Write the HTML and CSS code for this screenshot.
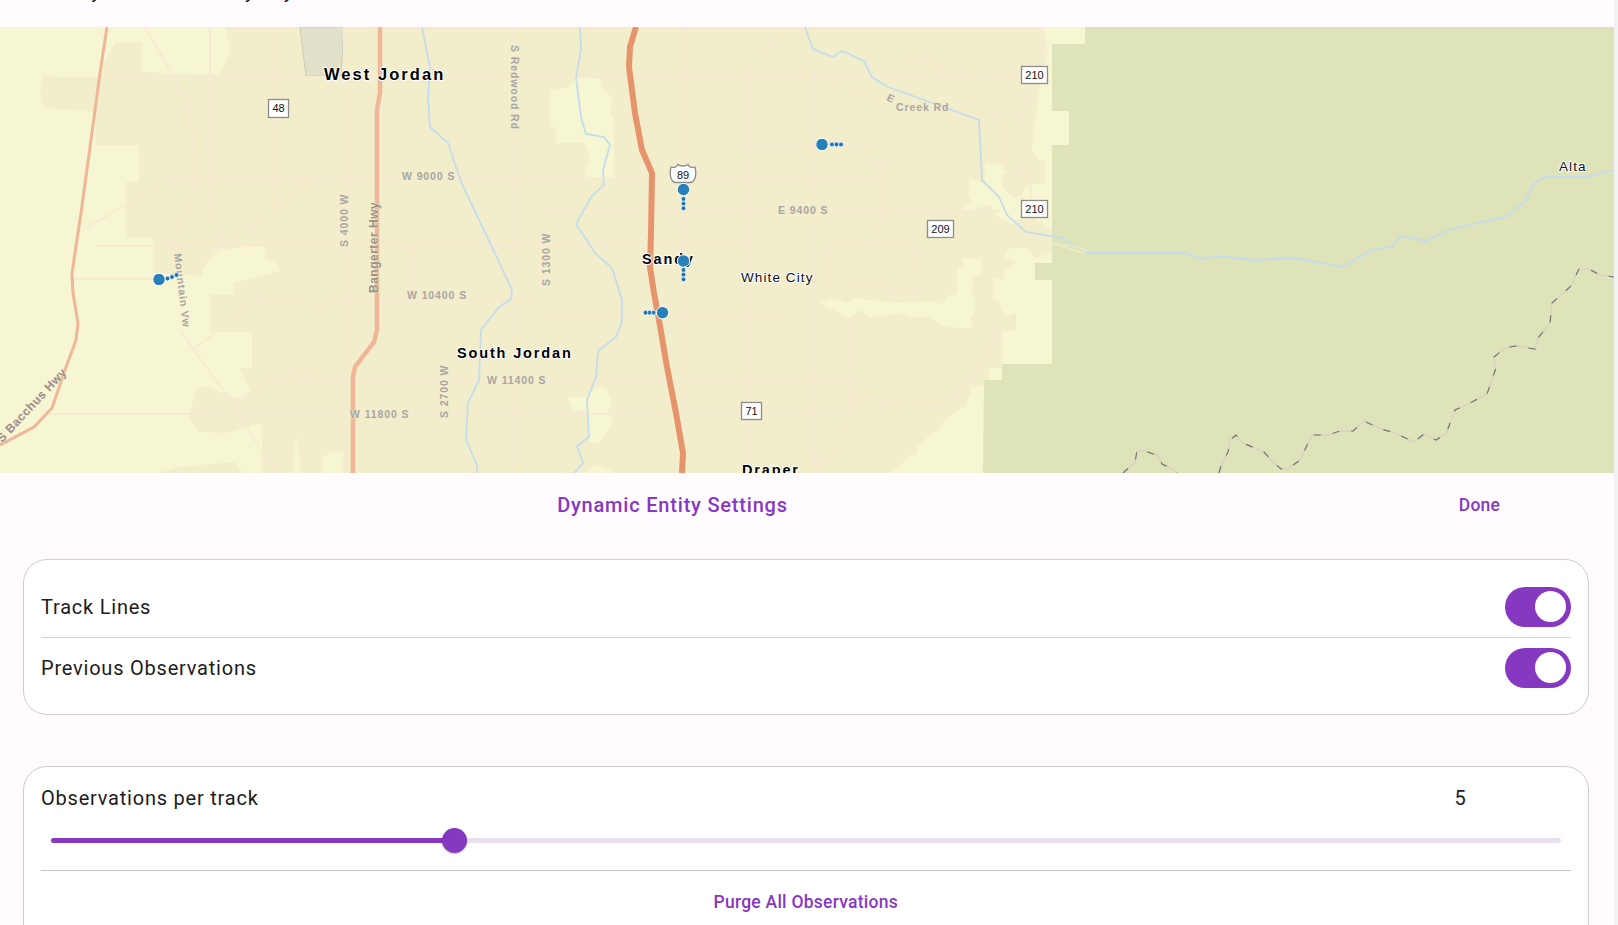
FILE: index.html
```html
<!DOCTYPE html>
<html lang="en">
<head>
    <meta charset="UTF-8">
    <title>Dynamic Entity Settings</title>
    <link rel="stylesheet" href="styles.css">
</head>
<body>
<div class="screen">
    <div class="top-bar"><div class="top-text">Hourly entries show by day</div></div>

    <svg class="map" viewBox="0 27 1614 446" width="1614" height="446" xmlns="http://www.w3.org/2000/svg">
        <rect class="land" x="0" y="27" width="1614" height="446"/>

        <!-- urban area -->
        <path class="urban" d="M225 27L231 50L220 75L142 72V42H115L105 60L98 77H52L43 73L40 95L43 108L95 112L96 145H139V182H126V238H153V273L201 276L208 260L213 250L246 247H265V260L275 262L280 271L265 275L234 283V295H210V332H252V368H239L251 393L241 400L207 387H196L189 418L198 432L227 433L262 423V473H1000V380L1052 260V183H1045V158L1040 162L1032 150V145L1040 85L1047 55L1043 27Z"/>
        <path class="urban" d="M158 473L179 467L234 462L243 473Z"/>

        <!-- light patches -->
        <path class="land" d="M550 90L566 88L576 78L599 75L602 88L612 97L611 113L614 118V177H586L585 170L590 157L585 143H557L555 127H550Z"/>
        <path class="land" d="M567 397H585L599 387L607 390L612 402L607 413H613L612 423L599 443H590L588 417L586 410H573Z"/>
        <path class="land" d="M585 473L590 468L600 465L615 473Z"/>
        <path class="land" d="M322 458L331 452L343 453V473H322Z"/>
        <path class="land" d="M296 433L301 473H293Z"/>
        <path class="land" d="M1010 248H1027L1035 258L1052 253V364H1002V332L1016 330V313L1005 317L1000 303L993 298V277L1004 280L1005 270L1017 263L1004 258Z"/>
        <path class="land" d="M989 368H1002V380H989Z"/>
        <path class="land" d="M984 385L970 388L971 396L967 398V405L943 422L940 430L932 433L917 447V455H908L907 460L887 473H984Z"/>
        <path class="land" d="M818 302L832 298L848 303L857 298L867 300L903 303L933 301L942 305L947 295H957V268L963 267V257L982 260V275L971 277L973 285L972 293L975 295V315L970 318L973 325L968 328L948 327L928 317H915L900 313L880 316L870 318L860 310L850 318Z"/>
        <path class="land" d="M985 163L1000 164L1007 172L1002 175L1003 188L1015 198L1021 195V217L1013 225L998 217L990 205L957 213L972 202L968 195L970 178L982 183L985 180Z"/>
        <path class="land" d="M1025 185L1052 183V232L1040 222L1030 215L1022 195Z"/>

        <!-- mountains -->
        <path class="forest" d="M1085 27H1614V473H983L984 380H1002V364H1052V280H1035V263H1052V145H1069V111H1052V44H1085Z"/>
        <path class="quarry" d="M300 27H344L341 76H306Z"/>

        <!-- minor roads -->
        <path class="road" d="M98 77H1020M170 178H880M96 246H345M72 279H155M345 246H620M345 298H540M540 211H1000M620 246H760M540 312H780M270 381H850M50 414H850"/>
        <path class="road" d="M210 27V220L230 250M278 27V205M344 27V473M412 246V298M513 27V473M683 27V473M749 60V473M815 70V473M850 318V417M179 473V467"/>
        <path class="road" d="M145 27L170 70L190 110L196 180L175 240V260M180 330L230 400L275 473M80 232L170 178M190 270L320 178M195 348L260 298H300L318 308L345 297L395 300M236 400L300 368L345 381M749 60L790 30"/>
        <path class="road" d="M900 58L927 60L943 75L1020 77M960 105L987 100L1002 125L1005 165L1028 172L1032 198M1013 132L1025 102L1040 68L1047 52L1042 28M827 247H918L920 293H888L882 285L833 288L828 283L825 257L827 247M850 403L865 398L897 402L903 407H938L957 395L963 383L980 373L985 353L995 343L993 330L1003 317M850 417L842 427L839 447L823 462L810 455L815 463L817 473M815 71L843 87L884 100M872 245V233L884 220V160L875 165L872 145H750"/>

        <!-- rivers -->
        <path class="river" d="M422 27L430 67L428 97L430 127L448 143L461 182L492 247L512 290L511 299L498 308L481 330L479 380L468 403L466 440L477 465V473"/>
        <path class="river" d="M580 27L581 50L576 78L581 117L586 134L604 137L610 145L603 170L604 185L592 196L576 224L595 253L612 268L622 300V322L616 337L598 351L596 377L587 400L589 437L577 446L583 463L574 473"/>
        <path class="river" d="M805 27L813 49L833 57L842 51L864 61L872 77L888 87L979 120L982 180L999 197L1007 215L1026 232L1063 238L1083 253H1185L1204 259L1216 256L1255 260L1295 258L1342 267L1372 250L1392 247L1401 236L1426 241L1451 229L1506 217L1525 202L1533 184L1545 177H1586L1614 170"/>
        <path class="lake" d="M1052 243L1078 247L1087 250L1083 253L1068 248Z"/>

        <!-- county line -->
        <path class="line-base" d="M1123 473L1135 462L1137 451H1145L1159 456L1162 464L1171 468L1177 473M1219 473L1222 463L1228 452L1230 440L1236 435L1243 443L1264 452L1273 462L1281 469H1288L1300 460L1312 435H1328L1340 431H1353L1364 421L1381 429L1395 433L1414 442L1424 434L1436 440L1446 434L1455 410L1472 402L1487 394L1496 368L1494 357L1505 348L1515 346L1535 349L1538 338L1550 323L1552 303L1570 287L1579 269H1589L1600 275L1614 277"/>
        <path class="line-dash" d="M1123 473L1135 462L1137 451H1145L1159 456L1162 464L1171 468L1177 473M1219 473L1222 463L1228 452L1230 440L1236 435L1243 443L1264 452L1273 462L1281 469H1288L1300 460L1312 435H1328L1340 431H1353L1364 421L1381 429L1395 433L1414 442L1424 434L1436 440L1446 434L1455 410L1472 402L1487 394L1496 368L1494 357L1505 348L1515 346L1535 349L1538 338L1550 323L1552 303L1570 287L1579 269H1589L1600 275L1614 277"/>

        <!-- highways -->
        <path class="hwy-minor" d="M380 27V93L377 110V330L374 342L355 367L353 377V473"/>
        <path class="hwy-thin" d="M107 27L100 73L91 140L81 213L72 273L73 293L78 323L76 340L65 370L52 408L34 427L0 445"/>
        <path class="hwy-main" d="M636 27L630 47L629 67L635 113L642 150L652 173L651 233L650 267L654 293L659 320L667 367L676 413L683 453L682 473"/>

        <!-- road names -->
        <text class="street" x="402" y="180">W 9000 S</text>
        <text class="street" x="407" y="299">W 10400 S</text>
        <text class="street" x="487" y="384">W 11400 S</text>
        <text class="street" x="350" y="418">W 11800 S</text>
        <text class="street" x="778" y="214">E 9400 S</text>
        <text class="street" transform="translate(511 45) rotate(90)">S Redwood Rd</text>
        <text class="street" transform="translate(348 247) rotate(-90)">S 4000 W</text>
        <text class="street" transform="translate(550 286) rotate(-90)">S 1300 W</text>
        <text class="street" transform="translate(448 418) rotate(-90)">S 2700 W</text>
        <text class="street" transform="translate(174 254) rotate(83)">Mountain Vw</text>
        <text class="street" transform="translate(886 100) rotate(25)">E</text>
        <text class="street" x="896" y="111">Creek Rd</text>
        <text class="street street-big" transform="translate(378 293) rotate(-90)">Bangerter Hwy</text>
        <text class="street street-big" transform="translate(2 443) rotate(-47)">S Bacchus Hwy</text>

        <!-- shields -->
        <g class="shield"><rect x="268.500" y="99.500" width="20" height="18"/><text x="278.500" y="112">48</text></g>
        <g class="shield"><rect x="1021.500" y="66.500" width="26" height="17"/><text x="1034.500" y="79">210</text></g>
        <g class="shield"><rect x="1021.500" y="200.500" width="26" height="17"/><text x="1034.500" y="213">210</text></g>
        <g class="shield"><rect x="927.500" y="220.500" width="26" height="17"/><text x="940.500" y="233">209</text></g>
        <g class="shield"><rect x="741.500" y="402.500" width="20" height="17"/><text x="751.500" y="415">71</text></g>
        <g class="shield"><path d="M671 167C674 168 677 167 678 164.500C680 166.500 686 166.500 688 164.500C689 167 692 168 695 167C696 171 696 175 695 178C694 181 692 182.500 690 182.500H676C674 182.500 672 181 671 178C670 175 670 171 671 167Z"/><text x="683" y="179">89</text></g>

        <!-- place names -->
        <text class="city" x="324" y="80">West Jordan</text>
        <text class="city city-small" x="457" y="358">South Jordan</text>
        <text class="city city-small" x="642" y="264">Sandy</text>
        <text class="city city-small" x="742" y="475">Draper</text>
        <text class="town" x="741" y="282">White City</text>
        <text class="town" x="1559" y="171">Alta</text>

        <!-- tracked entities -->
        <g class="entity">
            <circle cx="159" cy="279.500" r="6.200"/>
            <circle class="obs" cx="167.500" cy="278.500" r="2.400"/><circle class="obs" cx="172" cy="277" r="2.400"/><circle class="obs" cx="176.500" cy="275" r="2.400"/>
        </g>
        <g class="entity">
            <circle cx="822" cy="144.500" r="6.200"/>
            <circle class="obs" cx="832" cy="144.500" r="2.400"/><circle class="obs" cx="836.500" cy="144.500" r="2.400"/><circle class="obs" cx="841" cy="144.500" r="2.400"/>
        </g>
        <g class="entity">
            <circle cx="683.500" cy="189.500" r="6.200"/>
            <circle class="obs" cx="683.500" cy="199" r="2.400"/><circle class="obs" cx="683.500" cy="203.700" r="2.400"/><circle class="obs" cx="683.500" cy="208.300" r="2.400"/>
        </g>
        <g class="entity">
            <circle cx="683.500" cy="261" r="6.200"/>
            <circle class="obs" cx="683.500" cy="270" r="2.400"/><circle class="obs" cx="683.500" cy="274.700" r="2.400"/><circle class="obs" cx="683.500" cy="279.300" r="2.400"/>
        </g>
        <g class="entity">
            <circle cx="662.500" cy="312.700" r="6.200"/>
            <circle class="obs" cx="653.500" cy="312.700" r="2.400"/><circle class="obs" cx="649.500" cy="312.700" r="2.400"/><circle class="obs" cx="645.500" cy="312.700" r="2.400"/>
        </g>
    </svg>

    <div class="panel-head">
        <div class="panel-title">Dynamic Entity Settings</div>
        <div class="panel-done">Done</div>
    </div>

    <div class="card card-toggles">
        <div class="row">
            <span class="label">Track Lines</span>
            <span class="toggle"><span class="knob"></span></span>
        </div>
        <div class="row row-line">
            <span class="label">Previous Observations</span>
            <span class="toggle"><span class="knob"></span></span>
        </div>
    </div>

    <div class="card card-slider">
        <div class="slider-head">
            <span class="label">Observations per track</span>
            <span class="label slider-value">5</span>
        </div>
        <div class="slider">
            <div class="slider-fill" style="width: 26.75%"></div>
            <div class="slider-thumb" style="left: 26.75%"></div>
        </div>
        <div class="purge">Purge All Observations</div>
    </div>
</div>
</body>
</html>
```

FILE: styles.css
```css
html, body {
    margin: 0;
    height: 100%;
    overflow: hidden;
}
body {
    background: #f3f1f3;
    font-family: Roboto, sans-serif;
    color: #1d1b20;
}
.screen {
    width: 1614px;
    height: 925px;
    overflow: hidden;
    background: #fffbff;
}

.top-bar {
    height: 27px;
    overflow: hidden;
}
.top-text {
    margin: -21px 0 0 40px;
    font-size: 20px;
    line-height: 24px;
    letter-spacing: 0.6px;
}

.map {
    display: block;
}
.land { fill: #f7f6d3; }
.urban { fill: #f2eecb; }
.forest { fill: #dee3ba; }
.quarry { fill: #e2e0c8; stroke: #cdccb4; stroke-width: 1; }
.road { fill: none; stroke: #f6ebd2; stroke-width: 2; }
.river { fill: none; stroke: #c5dcec; stroke-width: 1.8; }
.lake { fill: #dee3ba; stroke: #f3eed0; stroke-width: 1; }
.line-base { fill: none; stroke: #d8d4c0; stroke-width: 1.6; }
.line-dash { fill: none; stroke: #75756f; stroke-width: 1.2; stroke-dasharray: 7 12; }
.hwy-main { fill: none; stroke: #e6946b; stroke-width: 6; }
.hwy-minor { fill: none; stroke: #efb798; stroke-width: 4.5; }
.hwy-thin { fill: none; stroke: #efb798; stroke-width: 3; }

.map text {
    font-family: "Liberation Sans", Arial, sans-serif;
    paint-order: stroke;
    stroke-linejoin: round;
}
.street {
    font-size: 10.5px;
    font-weight: 700;
    letter-spacing: 0.9px;
    fill: #a9a6a2;
    stroke: #f3eed0;
    stroke-width: 1;
}
.street-big {
    font-size: 12px;
    fill: #9c8e88;
    letter-spacing: 0.5px;
}
.shield rect, .shield path {
    fill: #fff;
    stroke: #8b8b8b;
    stroke-width: 1.3;
}
.shield text {
    font-size: 11px;
    fill: #111;
    text-anchor: middle;
}
.city {
    font-size: 16.5px;
    font-weight: 700;
    letter-spacing: 2.05px;
    fill: #000;
    stroke: #fff;
    stroke-width: 2;
}
.city-small {
    font-size: 14.5px;
    letter-spacing: 1.85px;
}
.town {
    font-size: 13.5px;
    letter-spacing: 1.1px;
    fill: #111;
    stroke: #fff;
    stroke-width: 2;
}
.entity circle {
    fill: #2880b8;
    stroke: #fff;
    stroke-width: 1;
}
.entity .obs {
    fill: #1a76b8;
    stroke-width: 0.7;
}

.panel-head {
    display: grid;
    grid-template-columns: 5fr 1fr;
    align-items: center;
    height: 63px;
    text-align: center;
    color: #8738c0;
    font-weight: 500;
}
.panel-title {
    font-size: 20px;
    letter-spacing: 0.8px;
}
.panel-done {
    font-size: 17.5px;
    letter-spacing: 0.2px;
}

.card {
    box-sizing: border-box;
    width: 1566px;
    margin: 22.5px 0 0 23px;
    padding: 0 17.5px 0 17px;
    background: #fff;
    border: 1.5px solid #cfcdcf;
    border-radius: 24px;
}
.card-toggles {
    height: 156.5px;
    padding-top: 17px;
}
.card-slider {
    margin-top: 51px;
    height: 200px;
}
.row {
    display: flex;
    align-items: center;
    justify-content: space-between;
    height: 60px;
}
.row-line {
    border-top: 1.5px solid #d6d4d6;
}
.label {
    font-size: 20px;
    letter-spacing: 0.78px;
}
.toggle {
    display: flex;
    justify-content: flex-end;
    align-items: center;
    box-sizing: border-box;
    width: 66px;
    height: 40px;
    padding-right: 5px;
    border-radius: 20px;
    background: #8738c0;
}
.knob {
    width: 31px;
    height: 31px;
    border-radius: 50%;
    background: #fff;
}

.slider-head {
    display: grid;
    grid-template-columns: 1fr 116px;
    align-items: center;
    height: 30px;
    padding-top: 16px;
}
.slider {
    position: relative;
    height: 5px;
    margin: 25px 10px 0;
    border-radius: 3px;
    background: #e8e0ec;
}
.slider-fill {
    height: 100%;
    border-radius: 3px;
    background: #8738c0;
}
.slider-thumb {
    position: absolute;
    top: -10px;
    width: 25px;
    height: 25px;
    margin-left: -12.5px;
    border-radius: 50%;
    background: #8738c0;
    box-shadow: 0 1px 2px rgba(0, 0, 0, 0.25);
}
.purge {
    margin-top: 27px;
    padding-top: 19px;
    border-top: 1.5px solid #cac4d0;
    text-align: center;
    font-size: 17.5px;
    line-height: 24px;
    font-weight: 500;
    letter-spacing: 0.25px;
    color: #8738c0;
}
```
